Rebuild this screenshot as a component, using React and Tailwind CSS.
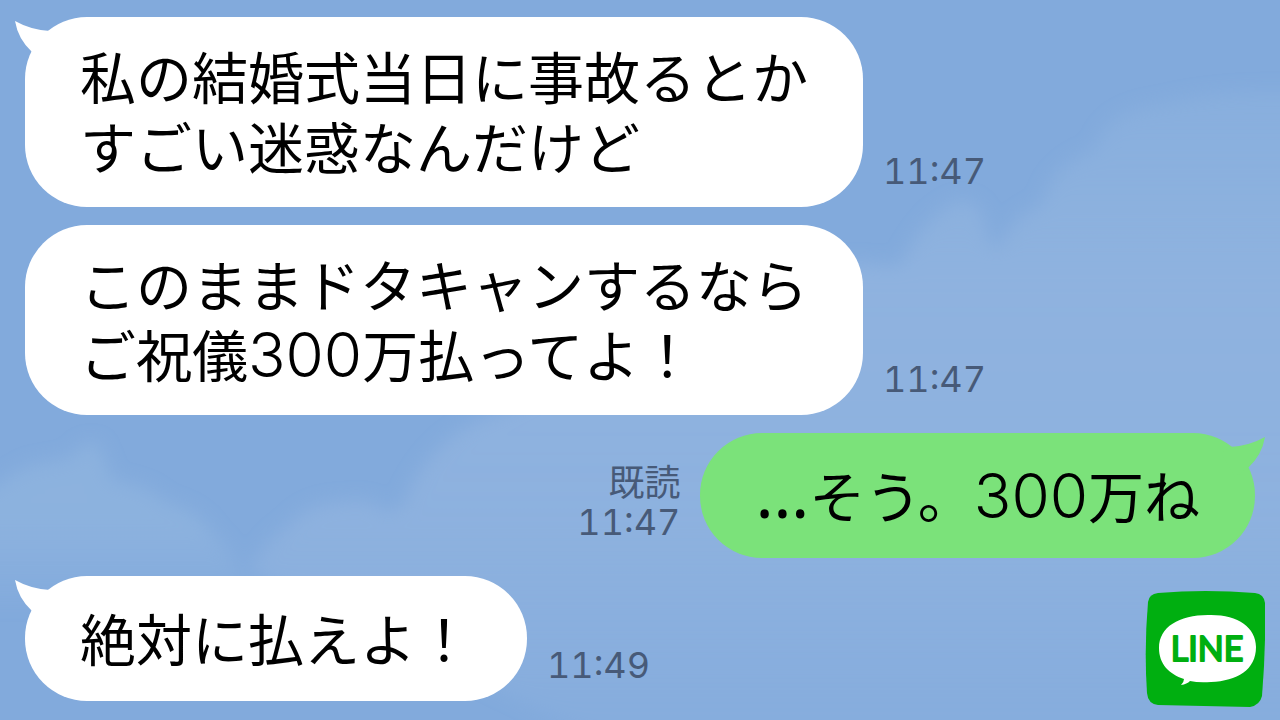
const messages = [
  {
    id: 1,
    from: "them",
    tail: true,
    time: "11:47",
    lines: ["私の結婚式当日に事故るとか", "すごい迷惑なんだけど"],
  },
  {
    id: 2,
    from: "them",
    time: "11:47",
    lines: ["このままドタキャンするなら", "ご祝儀300万払ってよ！"],
  },
  {
    id: 3,
    from: "me",
    tail: true,
    read: true,
    time: "11:47",
    lines: ["…そう。300万ね"],
  },
  {
    id: 4,
    from: "them",
    tail: true,
    time: "11:49",
    lines: ["絶対に払えよ！"],
  },
];

const Sky = () => (
  <svg
    className="absolute inset-0 w-full h-full"
    viewBox="0 0 1280 720"
    preserveAspectRatio="xMidYMid slice"
    aria-hidden="true"
  >
    <defs>
      <linearGradient id="cloud" x1="0" y1="0" x2="0" y2="1">
        <stop offset="0" stopColor="#93b7e0" stopOpacity="0.35" />
        <stop offset="0.3" stopColor="#93b5e0" stopOpacity="0.75" />
        <stop offset="0.65" stopColor="#93b5e0" stopOpacity="0.65" />
        <stop offset="1" stopColor="#93b5e0" stopOpacity="0.15" />
      </linearGradient>
      <linearGradient id="lowCloud" x1="0" y1="0" x2="0" y2="1">
        <stop offset="0" stopColor="#93b7e0" stopOpacity="0.6" />
        <stop offset="0.5" stopColor="#93b7e0" stopOpacity="0.6" />
        <stop offset="1" stopColor="#93b7e0" stopOpacity="0" />
      </linearGradient>
      <filter id="soft" x="-10%" y="-10%" width="120%" height="120%">
        <feGaussianBlur stdDeviation="9" />
      </filter>
    </defs>
    <g filter="url(#soft)">
      <path
        fill="url(#cloud)"
        d="M248 572Q270 535 286 528Q310 500 345 502Q372 496 385 512L402 506Q425 445 480 420L700 330L850 262L900 266Q925 212 960 200Q985 200 987 235L997 252Q1010 215 1042 205Q1050 165 1095 150Q1105 110 1160 104Q1220 88 1310 92V760H640Q400 640 248 572Z"
      />
      <path
        fill="url(#lowCloud)"
        d="M-30 500Q20 470 30 465L70 458Q86 438 98 444Q108 465 112 480Q150 485 165 502Q200 510 214 535Q240 552 248 610H-30Z"
      />
    </g>
  </svg>
);

const Tail = ({ mine }) => (
  <svg
    className={
      mine
        ? "absolute top-[4px] -right-[10px] w-[44px] h-[44px] -scale-x-100 text-[#7be27a]"
        : "absolute top-[4px] -left-[10px] w-[44px] h-[44px] text-white"
    }
    viewBox="0 0 44 44"
    fill="currentColor"
    aria-hidden="true"
  >
    <path d="M0 0Q16 9 35 10L44 16L30 40L17 31Q3 18 0 0Z" />
  </svg>
);

// Digits and dots are set larger, in a latin face
const Line = ({ text }) => (
  <span className="block">
    {text.split(/([0-9]+|…)/).map((part, i) => {
      if (i % 2 === 0) return part;
      return part === "…" ? (
        <span key={i} className="font-['Noto_Sans'] text-[68px] leading-none">
          {part}
        </span>
      ) : (
        <span key={i} className="font-[Inter] text-[62px] leading-none font-light">
          {part}
        </span>
      );
    })}
  </span>
);

const Message = ({ message }) => {
  const mine = message.from === "me";

  return (
    <li className={`flex items-end gap-5 ${mine ? "flex-row-reverse" : ""}`}>
      <div
        className={`relative flex items-center min-h-[125px] px-[55px] pt-[23px] pb-[27px] rounded-[62px] ${
          mine ? "bg-[#7be27a]" : "bg-white"
        }`}
      >
        {message.tail && <Tail mine={mine} />}
        <p className="relative text-[56px] leading-[70px] text-black">
          {message.lines.map((line) => (
            <Line key={line} text={line} />
          ))}
        </p>
      </div>
      <div
        className={`pb-[15px] text-[36px] leading-[42px] text-[#475a78] ${
          mine ? "text-right" : ""
        }`}
      >
        {message.read && <div>既読</div>}
        <time className="block font-[Inter] tabular-nums">{message.time}</time>
      </div>
    </li>
  );
};

const LineLogo = () => (
  <svg
    className="absolute bottom-[13px] right-[15px] w-[120px] h-[117px]"
    viewBox="0 0 120 117"
    role="img"
    aria-label="LINE"
  >
    <path
      fill="#00af10"
      d="M13 3Q60 -1 110 3Q119 4 120 13Q121 58 117 106Q115 115 105 117Q58 116 13 115Q3 114 2 103Q-1 58 3 12Q4 4 13 3Z"
    />
    <path
      fill="#fff"
      d="M63 25C92 24 111 37 111 57C111 80 92 91 66 92Q54 93 45 91Q42 94 36 95Q39 92 39 89C24 84 14 74 14 58C14 37 34 25 63 25Z"
    />
    <text
      x="62"
      y="71"
      textAnchor="middle"
      fill="#00af10"
      stroke="#00af10"
      strokeWidth="2"
      strokeLinejoin="round"
      className="font-[Lato,sans-serif] text-[34px] font-normal"
    >
      LINE
    </text>
  </svg>
);

const App = () => {
  return (
    <main
      lang="ja"
      className="relative min-h-screen overflow-hidden bg-[#82aadc] font-['Noto_Sans_CJK_JP',sans-serif]"
    >
      <Sky />
      <ul className="relative flex flex-col gap-[18px] px-[25px] pt-[17px] pb-[19px]">
        {messages.map((message) => (
          <Message key={message.id} message={message} />
        ))}
      </ul>
      <LineLogo />
    </main>
  );
};

export default App;
